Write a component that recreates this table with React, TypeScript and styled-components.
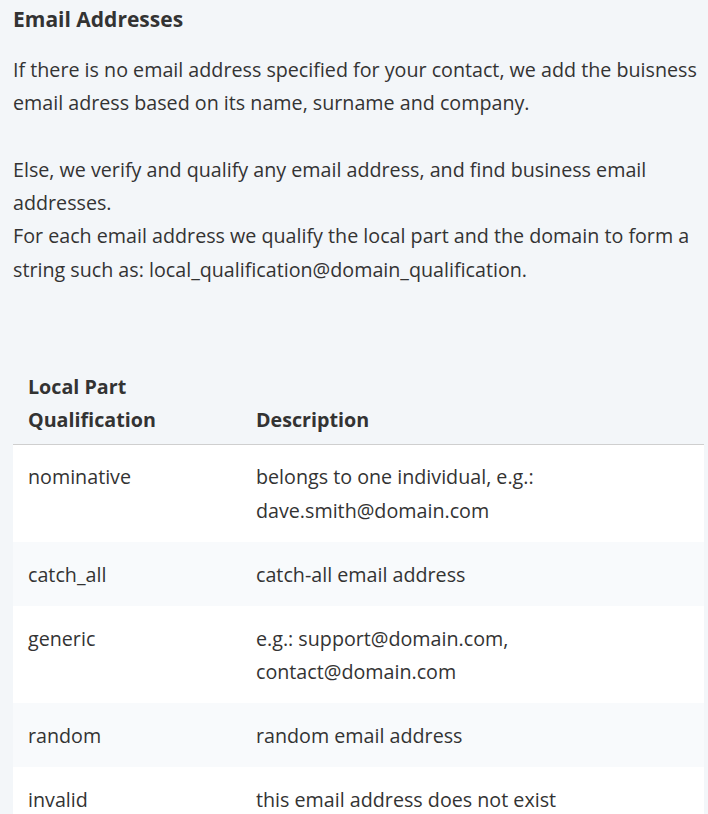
import React from "react";
import styled, { createGlobalStyle } from "styled-components";

const Global = createGlobalStyle`
  html, body {
    margin: 0;
    padding: 0;
    background: #f3f6f9;
  }
  body {
    font-family: "Segoe UI", "Open Sans", "Noto Sans", sans-serif;
    color: #333333;
  }
`;

const Page = styled.div`
  padding: 7px 4px 0 13px;
`;

const Title = styled.h2`
  margin: 0;
  font-size: 21px;
  line-height: 24px;
  font-weight: 700;
  color: #333333;
`;

const Para = styled.p`
  margin: 22px 0 0;
  font-size: 19.7px;
  line-height: 33.3px;
  & + & {
    margin-top: 33.3px;
  }
`;

const Table = styled.table`
  margin-top: 84px;
  width: 100%;
  table-layout: fixed;
  border-collapse: collapse;
  font-size: 19.7px;
  line-height: 33.3px;
`;

const HeadCell = styled.th<{ $w?: number }>`
  text-align: left;
  vertical-align: bottom;
  font-weight: 700;
  padding: 0 15px 7.5px;
  border-bottom: 1px solid #cfcfcf;
  ${(p) => (p.$w ? `width: ${p.$w}px;` : "")}
`;

const Row = styled.tr<{ $alt: boolean }>`
  background: ${(p) => (p.$alt ? "#f8fafc" : "#ffffff")};
`;

const Cell = styled.td`
  vertical-align: top;
  padding: 15.3px 15px;
`;

const rows: [string, React.ReactNode][] = [
  ["nominative", <>belongs to one individual, e.g.:<br />dave.smith@domain.com</>],
  ["catch_all", "catch-all email address"],
  ["generic", <>e.g.: support@domain.com,<br />contact@domain.com</>],
  ["random", "random email address"],
  ["invalid", "this email address does not exist"],
];

export default function App() {
  return (
    <>
      <Global />
      <Page>
        <Title>Email Addresses</Title>
        <Para>
          If there is no email address specified for your contact, we add the buisness email adress based on its name, surname and company.
        </Para>
        <Para>
          Else, we verify and qualify any email address, and find business email addresses.
          <br />
          For each email address we qualify the local part and the domain to form a string such as: local_qualification@domain_qualification.
        </Para>
        <Table>
          <thead>
            <tr>
              <HeadCell $w={198}>
                Local Part
                <br />
                Qualification
              </HeadCell>
              <HeadCell>Description</HeadCell>
            </tr>
          </thead>
          <tbody>
            {rows.map(([k, v], i) => (
              <Row key={k} $alt={i % 2 === 1}>
                <Cell>{k}</Cell>
                <Cell>{v}</Cell>
              </Row>
            ))}
          </tbody>
        </Table>
      </Page>
    </>
  );
}
